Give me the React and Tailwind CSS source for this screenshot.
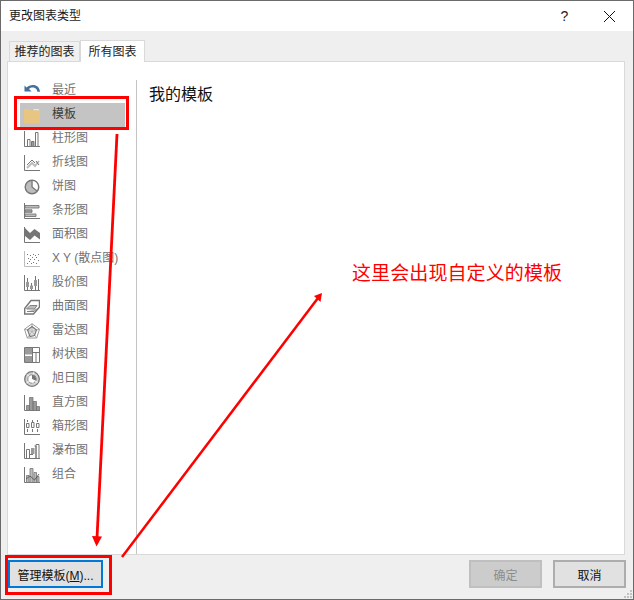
const FONT = "font-['Liberation_Sans','Noto_Sans_CJK_SC',sans-serif]";

const G = "#767676";
const M = "#9a9a9a";
const L = "#bdbdbd";

function Axis() {
  return <path d="M.5 0v15.500H16" fill="none" stroke={G} />;
}

const icons = {
  recent: (
    <path d="M2.500 4.500C5.500 1.500 11 1 14 4c1.200 1.200 1.800 3 2 4.800h-2.600c-.2-1.200-.6-2.200-1.400-3C10 3.900 7 4 5 5.900l2.600 2.700H.5V2.400z" fill="#41719c" />
  ),
  folder: (
    <g>
      <path d="M0 2h5.500l1 1.200H16V16H0z" fill="#e8c581" />
      <path d="M9.500 2.200H15v1H9.500z" fill="#f8efd9" />
    </g>
  ),
  bar: (
    <g>
      <Axis />
      <path d="M3.500 8.500h2.500v7H3.500zM11.500 1.500H14v14h-2.500z" fill="none" stroke={G} />
      <path d="M7.500 10.500H10v5H7.500z" fill={M} stroke={G} />
    </g>
  ),
  line: (
    <g>
      <Axis />
      <path d="M3 13l5-5 3 3 4-5" fill="none" stroke={L} strokeWidth="2" />
      <path d="M3 10l5-5 3 3M12 6l3 4" fill="none" stroke={G} />
    </g>
  ),
  pie: (
    <g>
      <circle cx="8" cy="8" r="6.800" fill={L} stroke={G} strokeWidth="1.400" />
      <path d="M8.500 2a6 6 0 0 1 4.200 9.500L8.500 8z" fill="#fff" />
      <path d="M8 1.500V8l5 4" fill="none" stroke={G} strokeWidth="1.200" />
    </g>
  ),
  hbar: (
    <g>
      <Axis />
      <path d="M1 2.500h14V5H1zM1 11h11v2.500H1z" fill={L} stroke={G} strokeWidth="0.900" />
      <path d="M1 6.800h7V9.300H1z" fill={M} stroke={G} strokeWidth="0.900" />
    </g>
  ),
  area: (
    <g>
      <Axis />
      <path d="M1 1l5 5 4.500-4L16 6v6.500l-5.500-4L6 13l-5-4z" fill={G} />
    </g>
  ),
  scatter: (
    <g>
      <path d="M.5 0v15.500H16" fill="none" stroke={L} />
      <path d="M3 12h1v1H3zM5 10h1v1H5zM7 12h1v1H7zM9 11h1v1H9zM12 12h1v1h-1zM4 7h1v1H4zM6 8h1v1H6zM8 6h1v1H8zM10 8h1v1h-1zM12 6h1v1h-1zM14 9h1v1h-1zM6 4h1v1H6zM9 3h1v1H9zM11 4h1v1h-1zM14 3h1v1h-1zM3 3h1v1H3z" fill={G} />
    </g>
  ),
  stock: (
    <g>
      <Axis />
      <path d="M3.500 3v12M7.500 8v7M11.500 1v14M14.500 4v11" stroke={G} fill="none" />
      <path d="M2 7h3v5H2zM6 10.500h3V14H6zM10 5h3v6h-3z" fill={M} />
    </g>
  ),
  surface: (
    <g>
      <path d="M.7 9.500L7 1.500h8.500v6.500l-6 7H.7z" fill="#fff" stroke={G} strokeWidth="1.400" />
      <path d="M2.500 10L6 6.500h7L10.500 10zM3 12.500h7l3-3" fill={L} stroke={G} strokeWidth="0.900" />
    </g>
  ),
  radar: (
    <g>
      <path d="M8 .7l7.500 5.500-2.800 8.800H3.300L.5 6.200z" fill="none" stroke={M} />
      <path d="M8 .7V8.500M.5 6.200L8 8.500l7.500-2.300M3.300 15L8 8.500l4.700 6.500" fill="none" stroke={M} strokeWidth="0.800" />
      <path d="M8 3.500l4.500 3.500-2 5.500-4.500 1-2.500-6.500z" fill={L} fillOpacity="0.500" stroke={G} strokeWidth="1.100" />
    </g>
  ),
  tree: (
    <g>
      <path d="M.5.500h15v15H.5z" fill="none" stroke={G} />
      <path d="M1 1h7v6.500H1zM1 9h7v6H1z" fill={M} />
      <path d="M8.500 1v14M9 5.500h6M12 6v9" stroke={G} fill="none" />
    </g>
  ),
  sunburst: (
    <g>
      <circle cx="8" cy="8" r="7.300" fill="#d2d2d2" stroke={G} strokeWidth="1.300" />
      <circle cx="8" cy="8" r="4.200" fill="#fff" stroke={G} strokeWidth="0.800" />
      <path d="M8 3.800a4.200 4.200 0 0 1 3.800 6L8 8z" fill={G} />
      <path d="M8 8l-3.500 3M8 8l1 4.500M3 3.500l2 2M13.500 11.500l-2.500-1.500M10 .8l-1 3M2.500 12l2-1.500" stroke="#fff" strokeWidth="0.900" />
    </g>
  ),
  histogram: (
    <g>
      <Axis />
      <path d="M2.500 10.500h3v5h-3zM5.500 2.500H9v13H5.500zM9 6.500h3.500v9H9zM12.500 11.500h3v4h-3z" fill={M} stroke={G} strokeWidth="0.800" />
    </g>
  ),
  box: (
    <g>
      <Axis />
      <path d="M3.500 1v2M3.500 10v3M8.500 1v2M8.500 10v3M13.500 1v2M13.500 10v3" stroke={G} />
      <path d="M2.500 4.500h2.500v4H2.500zM7.500 3.500h2.500v5H7.500zM12.500 4.500h2.500v4h-2.500z" fill="#fff" stroke={G} />
    </g>
  ),
  waterfall: (
    <g>
      <Axis />
      <path d="M2.500 6.500h3v9h-3zM6 11.500h3" fill="none" stroke={G} />
      <path d="M7 5h3.500v6H7z" fill={M} />
      <path d="M10.500 3h1.500v12.500M12 1.500h3V15.500h-3z" fill="none" stroke={G} />
    </g>
  ),
  combo: (
    <g>
      <Axis />
      <path d="M2.500 8.500h2.500v7H2.500zM6 1.500h3v14H6zM10 5.500h2.500v10H10zM13 9.500h2v6h-2z" fill={L} stroke={G} strokeWidth="0.800" />
      <path d="M2 12l4-3 4.500 4L15 7" fill="none" stroke="#555" strokeWidth="0.900" />
    </g>
  ),
};

const rows = [
  ["recent", "最近"],
  ["folder", "模板"],
  ["bar", "柱形图"],
  ["line", "折线图"],
  ["pie", "饼图"],
  ["hbar", "条形图"],
  ["area", "面积图"],
  ["scatter", "X Y (散点图)"],
  ["stock", "股价图"],
  ["surface", "曲面图"],
  ["radar", "雷达图"],
  ["tree", "树状图"],
  ["sunburst", "旭日图"],
  ["histogram", "直方图"],
  ["box", "箱形图"],
  ["waterfall", "瀑布图"],
  ["combo", "组合"],
];

function Row({ icon, label, selected }) {
  return (
    <div className={`h-6 w-[105px] flex items-center pl-[4px] whitespace-nowrap text-xs ${selected ? "bg-[#c4c4c4] text-[#3c3c3c]" : "text-[#727272]"}`}>
      <svg width="16" height="16" viewBox="0 0 16 16" className="shrink-0">
        {icons[icon]}
      </svg>
      <span className="ml-[12px] leading-[14px] -mt-[2px]">{label}</span>
    </div>
  );
}

export default function App() {
  return (
    <div className={`relative w-[634px] h-[600px] overflow-hidden flex flex-col border border-[#6a6a6a] bg-[#efefef] ${FONT}`}>
      <div className="h-[30px] shrink-0 bg-white flex items-center justify-between pl-2 text-xs text-[#1a1a1a]">
        <span>更改图表类型</span>
        <div className="flex items-center">
          <span className="w-[46px] text-center text-sm -mt-[1px] pl-[3px]">?</span>
          <svg width="46" height="14" viewBox="0 0 46 14" className="mr-[1px]">
            <path d="M18 2l11 11M29 2L18 13" stroke="#111" fill="none" strokeWidth="1" />
          </svg>
        </div>
      </div>

      <div className="h-[30px] shrink-0 flex items-end pl-2 text-xs text-[#222]">
        <div className="h-[21px] w-[71px] -mb-[1px] border border-[#d9d9d9] bg-[#f0f0f0] flex items-center justify-center">推荐的图表</div>
        <div className="relative z-10 h-[22px] w-[65px] -mb-[1px] border border-b-0 border-[#d9d9d9] bg-white flex items-center justify-center">所有图表</div>
      </div>

      <div className="h-[494px] shrink-0 ml-[6px] mr-[8px] border border-[#d9d9d9] bg-white flex">
        <div className="w-[129px] shrink-0 mt-[18px] border-r border-[#c4c4c4] pl-3">
          <div className="-mt-[1px] flex flex-col">
            {rows.map(([icon, label], i) => (
              <Row key={icon} icon={icon} label={label} selected={i === 1} />
            ))}
          </div>
        </div>
        <div className="pl-3 pt-[21px] text-base text-[#111]">我的模板</div>
      </div>

      <div className="flex-1 flex items-start justify-between pt-[5px] pl-[7px] pr-[7px] text-xs">
        <button className="h-[28px] w-[95px] pt-[3px] bg-[#e1e1e1] border-2 border-[#0078d7] text-[#111] flex items-center justify-center">
          <span>
            管理模板(<span className="underline">M</span>)...
          </span>
        </button>
        <div className="flex gap-[11px]">
          <button className="h-[28px] w-[73px] pt-[3px] bg-[#cccccc] border-2 border-[#bfbfbf] text-[#8c8c8c]">确定</button>
          <button className="h-[28px] w-[73px] pt-[3px] bg-[#e1e1e1] border-2 border-[#adadad] text-[#111]">取消</button>
        </div>
      </div>

      <svg width="10" height="10" viewBox="0 0 10 10" className="absolute right-0 bottom-0">
        <path d="M7 1h2v2H7zM4 4h2v2H4zM7 4h2v2H7zM1 7h2v2H1zM4 7h2v2H4zM7 7h2v2H7z" fill="#c2c2c2" />
      </svg>

      <div className="absolute left-[13px] top-[95px] w-[115px] h-[34px] border-[3px] border-[#fe0000]" />
      <div className="absolute left-[4px] top-[554px] w-[107px] h-[40px] border-[3px] border-[#fe0000]" />
      <svg width="634" height="600" viewBox="0 0 634 600" className="absolute -left-px -top-px pointer-events-none">
        <path d="M117 134L97 538" stroke="#fe0000" strokeWidth="2.800" fill="none" />
        <path d="M92 536l10 .5-5.500 10z" fill="#fe0000" />
        <path d="M122 557L318 298" stroke="#fe0000" strokeWidth="2.500" fill="none" />
        <path d="M314 296l8-3-1.500 9z" fill="#fe0000" />
      </svg>
      <span className="absolute left-[351px] top-[259px] text-[19px] leading-[28px] tracking-[0.1px] text-[#fe0000] whitespace-nowrap">这里会出现自定义的模板</span>
    </div>
  );
}
